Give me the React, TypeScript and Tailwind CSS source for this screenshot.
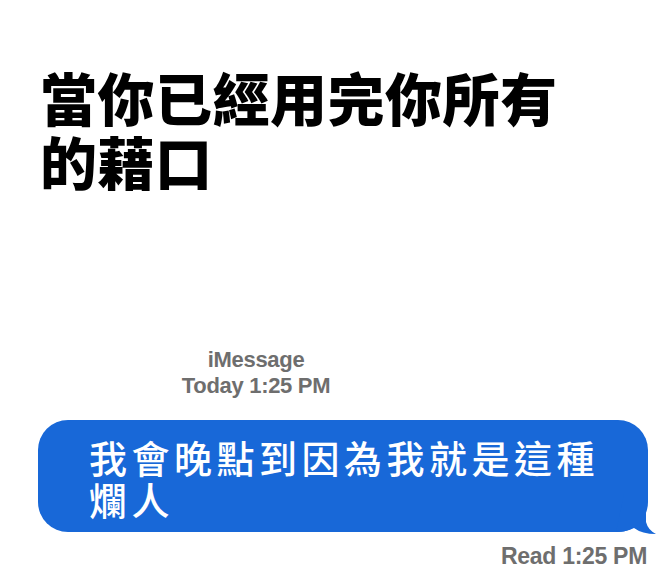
import React from "react";

const App = () => {
  return (
    <div className="w-[662px] h-[583px] bg-white overflow-hidden">
      <h1 className="pt-[64px] pl-[40px] text-[57px] leading-[64px] font-black tracking-[0.5px] text-black font-['Noto_Sans_CJK_TC','Noto_Sans_CJK_SC',sans-serif]">
        <div>當你已經用完你所有</div>
        <div>的藉口</div>
      </h1>

      <div className="mt-[155px] w-[512px] flex flex-col items-center text-[22px] leading-[26px] font-bold text-[#6e6e6e] tracking-[-0.3px] font-['Liberation_Sans',Arial,sans-serif]">
        <span>iMessage</span>
        <span>Today 1:25 PM</span>
      </div>

      <div className="relative mt-[21px] ml-[38px] w-[610px]">
        <div className="rounded-[30px] bg-[#1868d8] pl-[51px] pr-[10px] pt-[16px] pb-[12px] text-[38px] leading-[42px] font-medium text-white tracking-[4.5px] font-['Noto_Sans_CJK_TC','Noto_Sans_CJK_SC',sans-serif]">
          <div>我會晚點到因為我就是這種</div>
          <div>爛人</div>
        </div>
        <svg className="absolute right-[-8px] bottom-[-2px]" width="40" height="40" viewBox="0 0 40 40">
          <path d="M8 0 L30 0 L30 28 Q32 36 40 40 Q26 40 18 34 Q10 38 0 38 Z" fill="#1868d8" />
        </svg>
      </div>

      <div className="mt-[11px] pr-[15px] text-right text-[23px] leading-[26px] font-bold text-[#6e6e6e] tracking-[-0.3px] font-['Liberation_Sans',Arial,sans-serif]">
        Read 1:25 PM
      </div>
    </div>
  );
};

export default App;
